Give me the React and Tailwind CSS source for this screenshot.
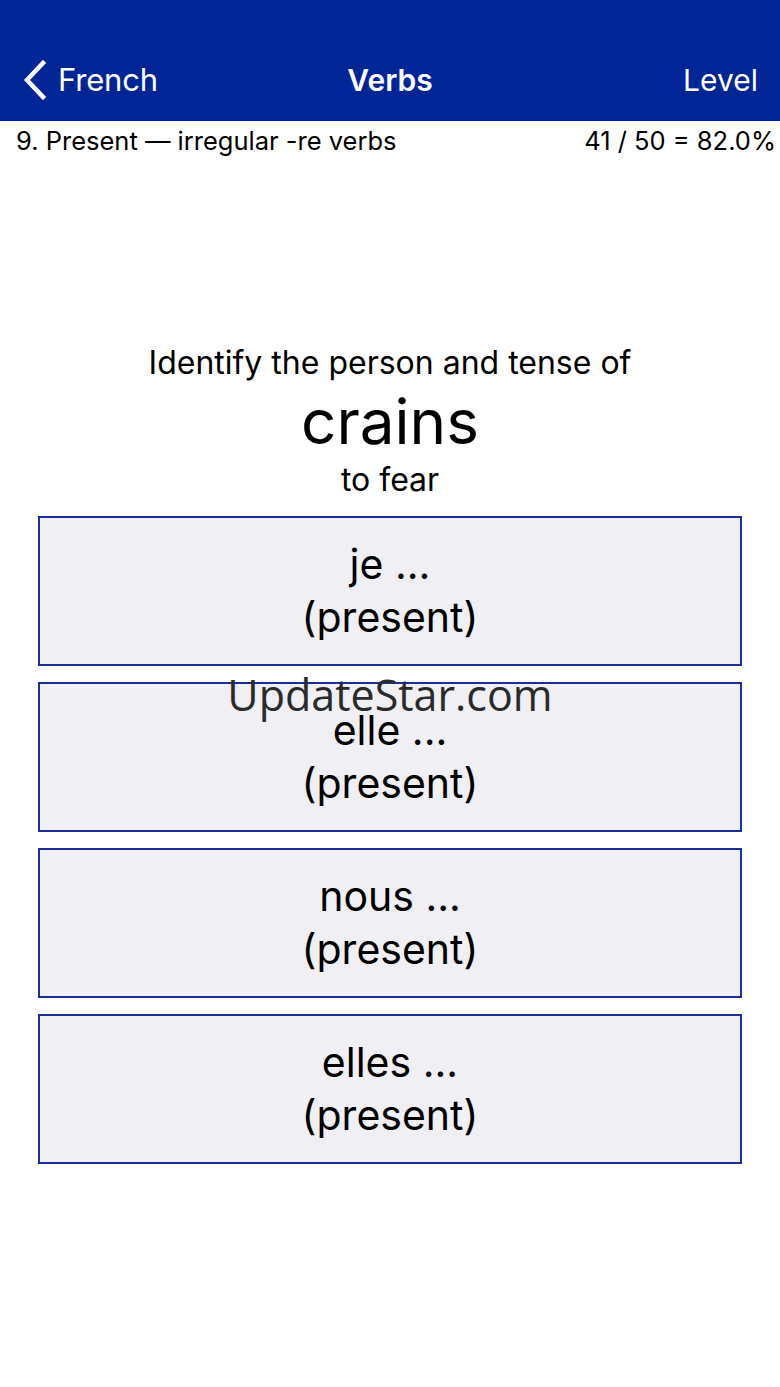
import React from 'react';

const choices = ['je ...', 'elle ...', 'nous ...', 'elles ...'];

const App = () => {
  return (
    <div className="relative w-[780px] h-[1387px] bg-white text-black" style={{ fontFamily: 'Inter, "Liberation Sans", sans-serif' }}>
      {/* Nav bar */}
      <div className="h-[121px] bg-[#002596] pt-[40px]">
        <div className="relative flex h-[80px] items-center px-[22px] text-white">
          <div className="flex items-center gap-[10px]">
            <svg width="26" height="40" viewBox="0 0 26 40" fill="none">
              <path d="M21 3 L5 20 L21 37" stroke="white" strokeWidth="4.5" strokeLinecap="square" />
            </svg>
            <span className="text-[31px] tracking-[-0.2px]">French</span>
          </div>
          <span className="absolute left-1/2 -translate-x-1/2 text-[30px] font-semibold">Verbs</span>
          <span className="ml-auto text-[30px]">Level</span>
        </div>
      </div>

      {/* Lesson line */}
      <div className="flex items-center justify-between pl-[16px] pr-[4px] h-[40px] text-[25.5px]">
        <span>9. Present — irregular -re verbs</span>
        <span>41 / 50 = 82.0%</span>
      </div>

      {/* Question */}
      <div className="mt-[180px] flex flex-col items-center">
        <div className="text-[32px] leading-[44px]">Identify the person and tense of</div>
        <div className="text-[62px] leading-[74px]">crains</div>
        <div className="text-[32px] leading-[42px]">to fear</div>
      </div>

      {/* Answers */}
      <div className="mt-[15px] flex flex-col gap-[16px] px-[38px]">
        {choices.map((c) => (
          <button
            key={c}
            className="flex h-[150px] w-full flex-col items-center justify-center border-2 border-[#1a2f9c] bg-[#efeff4] text-[41px] leading-[53px]"
          >
            <span>{c}</span>
            <span>(present)</span>
          </button>
        ))}
      </div>

      {/* Watermark */}
      <div
        className="absolute left-0 right-0 top-[663px] text-center text-[43px] text-[#2a2a2a]"
        style={{ fontFamily: '"Open Sans", sans-serif' }}
      >
        UpdateStar.com
      </div>
    </div>
  );
};

export default App;
